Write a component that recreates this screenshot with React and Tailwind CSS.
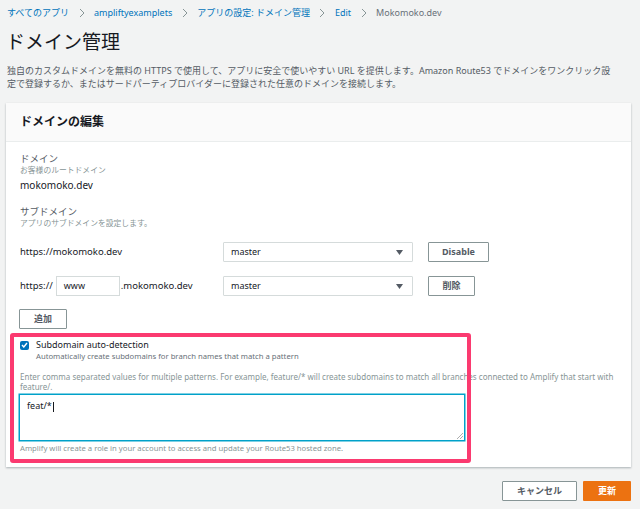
import React from "react";

const FONT = { fontFamily: '"Noto Sans", "Noto Sans CJK JP", sans-serif' };

function Chevron() {
  return (
    <svg width="6" height="10" viewBox="0 0 6 10" className="mx-[9.5px]">
      <polyline points="1,1 5,5 1,9" fill="none" stroke="#879596" strokeWidth="1" />
    </svg>
  );
}

function SelectBox({ value }) {
  return (
    <div className="flex items-center justify-between w-[190px] h-[20px] bg-white border border-[#d5dbdb] rounded-[1px] pl-[7px] pr-[9px] text-[9px] text-[#16191f]">
      <span>{value}</span>
      <svg width="7" height="5" viewBox="0 0 7 5">
        <polygon points="0,0 7,0 3.5,5" fill="#545b64" />
      </svg>
    </div>
  );
}

function Btn({ children, className = "" }) {
  return (
    <button
      className={`h-[20px] bg-white border border-[#879596] rounded-[1px] text-[9px] font-bold text-[#545b64] ${className}`}
    >
      {children}
    </button>
  );
}

export default function App() {
  return (
    <div className="w-[640px] h-[509px] bg-[#f2f3f3] overflow-hidden" style={FONT}>
      {/* breadcrumb */}
      <div className="flex items-center h-[26px] pl-[7px] text-[9px] whitespace-nowrap">
        <span className="text-[#0073bb]">すべてのアプリ</span>
        <Chevron />
        <span className="text-[#0073bb]">ampliftyexamplets</span>
        <Chevron />
        <span className="text-[#0073bb]">アプリの設定: ドメイン管理</span>
        <Chevron />
        <span className="text-[#0073bb]">Edit</span>
        <Chevron />
        <span className="text-[#687078]">Mokomoko.dev</span>
      </div>

      <h1 className="mt-[4px] pl-[6px] text-[19px] leading-[24px] text-[#16191f]">ドメイン管理</h1>

      <p className="mt-[10px] pl-[7px] text-[9px] leading-[13px] text-[#545b64] whitespace-nowrap">
        独自のカスタムドメインを無料の HTTPS で使用して、アプリに安全で使いやすい URL を提供します。Amazon Route53 でドメインをワンクリック設
        <br />
        定で登録するか、またはサードパーティプロバイダーに登録された任意のドメインを接続します。
      </p>

      {/* card */}
      <div className="mt-[13px] ml-[6px] w-[625px] bg-white shadow-[0_1px_2px_rgba(0,28,36,0.3)]">
        <div className="h-[39px] flex items-center px-[14px] bg-[#fafafa] border-b border-[#eaeded]">
          <h2 className="text-[12px] font-bold text-[#16191f]">ドメインの編集</h2>
        </div>

        <div className="px-[14px] pt-[10px] pb-[14px]">
          <div className="text-[9.5px] leading-[13px] text-[#545b64]">ドメイン</div>
          <div className="text-[7.8px] leading-[11px] text-[#879596]">お客様のルートドメイン</div>
          <div className="mt-[2px] text-[10px] leading-[14px] text-[#16191f]">mokomoko.dev</div>

          <div className="mt-[13px] text-[9.5px] leading-[13px] text-[#545b64]">サブドメイン</div>
          <div className="text-[7.8px] leading-[11px] text-[#879596]">アプリのサブドメインを設定します。</div>

          <div className="mt-[13px] flex items-center h-[20px]">
            <div className="w-[203px] text-[9.5px] text-[#16191f]">https://mokomoko.dev</div>
            <SelectBox value="master" />
            <Btn className="ml-[15px] w-[61px]">Disable</Btn>
          </div>

          <div className="mt-[14px] flex items-center h-[20px]">
            <div className="w-[203px] flex items-center text-[9.5px] text-[#16191f]">
              <span>https://</span>
              <div className="ml-[3px] w-[64px] h-[20px] flex items-center pl-[7px] bg-white border border-[#d5dbdb] text-[9px]">
                www
              </div>
              <span className="ml-[1px]">.mokomoko.dev</span>
            </div>
            <SelectBox value="master" />
            <Btn className="ml-[15px] w-[47px]">削除</Btn>
          </div>

          <Btn className="mt-[13px] w-[48px] -ml-[1px]">追加</Btn>

          {/* auto detection */}
          <div className="relative mt-[10px]">
            <div className="flex items-center h-[12px]">
              <div className="w-[9px] h-[9px] rounded-[2px] bg-[#0073bb] flex items-center justify-center">
                <svg width="7" height="6" viewBox="0 0 7 6">
                  <polyline points="1,3 2.8,5 6,1" fill="none" stroke="white" strokeWidth="1.4" />
                </svg>
              </div>
              <span className="ml-[7px] text-[9px] text-[#16191f]">Subdomain auto-detection</span>
            </div>
            <div className="pl-[16px] text-[7.7px] leading-[11px] text-[#687078]">
              Automatically create subdomains for branch names that match a pattern
            </div>

            <p className="mt-[10px] text-[8px] leading-[10px] text-[#879596] whitespace-nowrap">
              Enter comma separated values for multiple patterns. For example, feature/* will create subdomains to match all branches connected to Amplify that start with
              <br />
              feature/.
            </p>

            <div className="relative mt-[2px] -ml-[1px] w-[446px] h-[47px] border border-[#00a1c9] shadow-[0_0_0_0.5px_#00a1c9] bg-white pl-[7px] pt-[4px] text-[9px] text-[#16191f]">
              <span>feat/*</span>
              <span className="inline-block w-[1px] h-[10px] bg-[#16191f] align-middle ml-[1px]" />
              <svg width="6" height="6" viewBox="0 0 6 6" className="absolute right-[1px] bottom-[1px]">
                <line x1="0" y1="6" x2="6" y2="0" stroke="#999" strokeWidth="0.8" />
                <line x1="3" y1="6" x2="6" y2="3" stroke="#999" strokeWidth="0.8" />
              </svg>
            </div>

            <div className="mt-[2px] text-[7.7px] leading-[10px] text-[#879596]">
              Amplify will create a role in your account to access and update your Route53 hosted zone.
            </div>

            {/* annotation overlay */}
            <div className="absolute left-[-10px] top-[-6px] w-[461px] h-[130px] border-[4px] border-[#fb3a70] rounded-[3px] pointer-events-none" />
          </div>
        </div>
      </div>

      {/* footer buttons */}
      <div className="mt-[14px] flex justify-end pr-[9px] gap-[6px]">
        <button className="w-[75px] h-[20px] bg-white border border-[#879596] rounded-[1px] text-[9px] font-bold text-[#545b64]">
          キャンセル
        </button>
        <button className="w-[48px] h-[20px] bg-[#ec7211] rounded-[1px] text-[9px] font-bold text-white">
          更新
        </button>
      </div>
    </div>
  );
}
